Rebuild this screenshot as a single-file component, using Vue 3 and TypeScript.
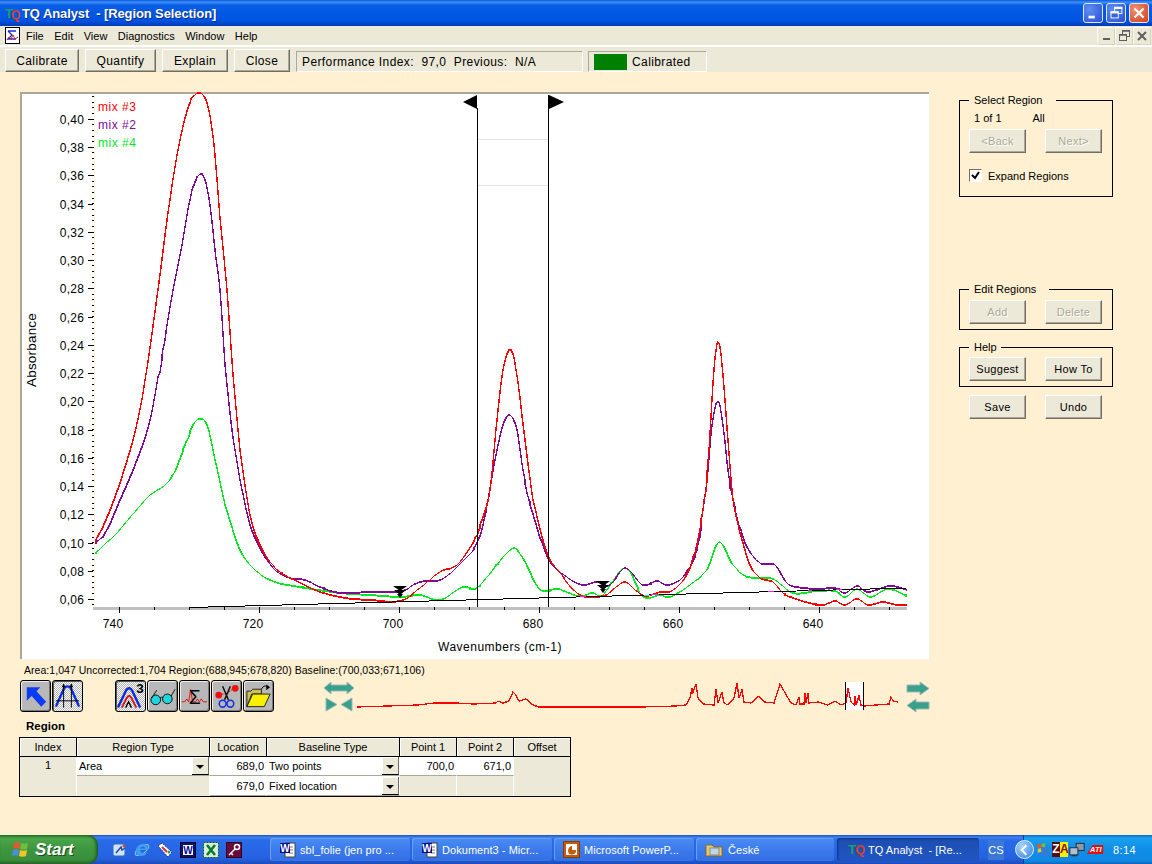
<script setup lang="ts">
type Pt = [number, number];

// catmull-rom through the hand-read points, snapped to whole pixels for the stepped look
const smooth = (pts: Pt[]): string => {
  const out: string[] = [];
  for (let i = 0; i < pts.length - 1; i++) {
    const p0 = pts[Math.max(i - 1, 0)];
    const p1 = pts[i];
    const p2 = pts[i + 1];
    const p3 = pts[Math.min(i + 2, pts.length - 1)];
    const steps = Math.max(1, Math.ceil(p2[0] - p1[0]));
    for (let s = 0; s < steps; s++) {
      const t = s / steps;
      const f = (a: number, b: number, c: number, d: number) =>
        0.5 * (2 * b + (c - a) * t + (2 * a - 5 * b + 4 * c - d) * t * t + (3 * b - a - 3 * c + d) * t * t * t);
      out.push(`${Math.round(f(p0[0], p1[0], p2[0], p3[0]))},${Math.round(f(p0[1], p1[1], p2[1], p3[1]))}`);
    }
  }
  const last = pts[pts.length - 1];
  out.push(`${last[0]},${last[1]}`);
  return out.join(" ");
};

const redPts: Pt[] = [
  [95, 542], [105, 522], [115, 497], [125, 467], [135, 432], [145, 380], [158, 290], [170, 200], [180, 140], [190, 103],
  [195, 95], [199, 93], [203, 95], [208, 107], [214, 145], [220, 218], [227, 290], [233, 375], [240, 450], [250, 515],
  [260, 545], [270, 562], [280, 572], [300, 583], [320, 592], [345, 598], [370, 600], [400, 601], [420, 588], [440, 572],
  [457, 565], [473, 543], [483, 517], [490, 490], [497, 420], [503, 370], [510, 350], [516, 370], [525, 440], [533, 500],
  [547, 553], [560, 573], [580, 595], [603, 596], [615, 588], [625, 582], [635, 590], [645, 596], [660, 592], [673, 590],
  [690, 568], [703, 510], [709, 450], [714, 370], [718, 342], [722, 365], [728, 440], [733, 500], [740, 533], [750, 565],
  [760, 578], [773, 582], [783, 593], [793, 598], [820, 605], [835, 601], [845, 605], [857, 599], [868, 605], [883, 602],
  [897, 605], [907, 605],
];
const purplePts: Pt[] = [
  [95, 543], [105, 533], [120, 500], [135, 465], [150, 420], [165, 340], [173, 290], [182, 245], [190, 200], [195, 182],
  [200, 174], [205, 180], [210, 205], [215, 250], [220, 290], [225, 365], [232, 430], [240, 480], [250, 525], [262, 552],
  [275, 570], [290, 578], [305, 580], [320, 587], [340, 593], [370, 592], [395, 592], [405, 590], [420, 582], [440, 580],
  [457, 567], [477, 543], [488, 500], [495, 460], [503, 425], [510, 415], [517, 430], [523, 470], [529, 500], [548, 558],
  [567, 577], [583, 585], [597, 582], [610, 585], [625, 568], [643, 585], [657, 581], [667, 585], [683, 577], [697, 550],
  [703, 510], [707, 480], [712, 425], [718, 401], [723, 425], [728, 470], [733, 500], [745, 543], [760, 563], [775, 565],
  [787, 583], [797, 587], [817, 589], [835, 588], [845, 593], [857, 586], [868, 592], [890, 586], [907, 590],
];
const greenPts: Pt[] = [
  [95, 553], [115, 535], [135, 512], [150, 495], [170, 480], [185, 445], [193, 425], [200, 419], [207, 425], [215, 460],
  [225, 505], [240, 550], [255, 570], [275, 582], [300, 587], [340, 593], [370, 595], [400, 597], [420, 595], [440, 600],
  [463, 587], [478, 587], [510, 550], [522, 557], [538, 587], [547, 591], [558, 589], [578, 596], [593, 593], [603, 595],
  [625, 568], [640, 593], [648, 598], [660, 595], [670, 597], [690, 585], [707, 570], [719, 542], [733, 565], [748, 577],
  [773, 579], [793, 593], [817, 591], [835, 591], [845, 597], [857, 589], [870, 597], [888, 589], [907, 596],
];

const redLine = smooth(redPts);
const purpleLine = smooth(purplePts);
const greenLine = smooth(greenPts);

const yLabels = Array.from({ length: 18 }, (_, i) => ({
  y: Math.round(119 + 28.24 * i),
  text: (0.4 - 0.02 * i).toFixed(2).replace(".", ","),
}));
const yMinor = Array.from({ length: 91 }, (_, i) => Math.round(96 + 5.648 * i)).filter((y) => y < 607);
const xLabels = [
  { x: 113, text: "740" },
  { x: 253, text: "720" },
  { x: 393, text: "700" },
  { x: 533, text: "680" },
  { x: 673, text: "660" },
  { x: 813, text: "640" },
];
const xTicks = Array.from({ length: 23 }, (_, i) => 119.5 + 35 * i).filter((x) => x < 907);

const overview =
  "356,707 417,705 433,703 455,703 473,704 495,703 497,701 502,703 508,701 512,692 514,694 518,701 525,699 532,705 538,707 " +
  "640,707 675,706 685,705 689,698 691,688 692,693 695,684 697,698 702,704 713,705 715,689 717,703 720,695 721,693 723,703 " +
  "727,705 733,698 736,683 738,698 741,690 743,702 750,703 758,696 763,702 773,703 779,684 787,698 790,703 795,705 798,697 " +
  "799,704 803,704 804,693 805,703 807,693 808,703 817,702 827,705 834,701 840,705 845,703 847,688 850,702 853,705 854,696 " +
  "855,705 858,696 860,705 863,706 888,704 890,697 892,701 897,702";

const menus = ["File", "Edit", "View", "Diagnostics", "Window", "Help"];
const tasks = [
  { label: "sbl_folie (jen pro ...", icon: "word", width: 140 },
  { label: "Dokument3 - Micr...", icon: "word", width: 140 },
  { label: "Microsoft PowerP...", icon: "ppt", width: 140 },
  { label: "České", icon: "folder", width: 138 },
];
</script>

<template>
  <div class="screen">
    <header class="titlebar">
      <svg class="app-logo" width="16" height="16" viewBox="0 0 16 16">
        <text x="0" y="13" font-size="13" font-weight="700" fill="#1c9a7a" font-family="Liberation Sans, sans-serif">T</text>
        <text x="6" y="14" font-size="12" font-weight="700" fill="#d8402a" font-family="Liberation Sans, sans-serif">Q</text>
      </svg>
      <span class="title-text">TQ Analyst&nbsp; - [Region Selection]</span>
      <div class="win-buttons">
        <span class="win-btn">
          <svg width="20" height="20" viewBox="0 0 20 20"><rect x="5" y="13" width="7" height="3" fill="#fff" /></svg>
        </span>
        <span class="win-btn">
          <svg width="20" height="20" viewBox="0 0 20 20" fill="none" stroke="#fff">
            <rect x="8.5" y="3.5" width="8" height="7" stroke-width="1" />
            <path d="M8 4.5h9" stroke-width="2" />
            <rect x="4.5" y="8.5" width="8" height="7" fill="#3a63dc" stroke-width="1" />
            <path d="M4 9.5h9" stroke-width="2" />
          </svg>
        </span>
        <span class="win-btn win-close">
          <svg width="20" height="20" viewBox="0 0 20 20" stroke="#fff" stroke-width="2.4"><path d="M5 5l10 10M15 5L5 15" /></svg>
        </span>
      </div>
    </header>

    <nav class="menubar">
      <svg class="doc-icon" width="15" height="17" viewBox="0 0 15 17">
        <rect x="0.5" y="0.5" width="14" height="16" fill="#fff" stroke="#000" />
        <path d="M3 4h8M3 4l4 4-4 4h8" fill="none" stroke="#1a2bd0" stroke-width="1.3" />
        <path d="M2 13l2-3 2 2 2-4 2 4 3-2" fill="none" stroke="#e02020" />
      </svg>
      <div class="menu-items">
        <span v-for="m in menus" :key="m">{{ m }}</span>
      </div>
      <div class="mdi-buttons">
        <span class="mdi-btn"><i class="mdi-min"></i></span>
        <span class="mdi-btn">
          <svg width="14" height="14" viewBox="0 0 14 14" fill="none" stroke="#5f5f5f">
            <rect x="5.5" y="1.5" width="7" height="6" />
            <rect x="2.5" y="5.5" width="7" height="6" fill="#ece9d8" />
            <path d="M2 6h8M5 2h8" stroke-width="1.5" />
          </svg>
        </span>
        <span class="mdi-btn">
          <svg width="14" height="14" viewBox="0 0 14 14" stroke="#5f5f5f" stroke-width="2"><path d="M3 3l8 8M11 3l-8 8" /></svg>
        </span>
      </div>
    </nav>

    <div class="toolbar">
      <button class="btn tb-calibrate">Calibrate</button>
      <button class="btn tb-quantify">Quantify</button>
      <button class="btn tb-explain">Explain</button>
      <button class="btn tb-close">Close</button>
      <div class="sunken perf">Performance Index:&nbsp; 97,0&nbsp; Previous:&nbsp; N/A</div>
      <div class="sunken calibrated"><i class="green-box"></i>Calibrated</div>
    </div>

    <main class="workspace">
      <section class="left-col">
        <div class="chart">
          <svg width="910" height="568" viewBox="20 92 910 568" class="chart-svg">
            <rect x="20" y="92" width="910" height="568" fill="#fff" />
            <path d="M20 93h910M21 92v568" stroke="#aca899" stroke-width="2" fill="none" />
            <path d="M20 659.5h910M929.5 92v568" stroke="#f6f3e6" fill="none" />

            <path d="M477 139h71M477 185.500h71" stroke="#e4e4e4" fill="none" shape-rendering="crispEdges" />

            <!-- y axis -->
            <path d="M94.500 94v513" stroke="#fdf3d8" shape-rendering="crispEdges" />
            <g shape-rendering="crispEdges" stroke="#000">
              <path v-for="y in yMinor" :key="y" :d="`M92 ${y}.5h2`" />
              <path v-for="l in yLabels" :key="l.text" :d="`M88 ${l.y}.5h5`" />
            </g>
            <text v-for="l in yLabels" :key="l.y" :x="84" :y="l.y + 5" text-anchor="end" class="axis-text">{{ l.text }}</text>

            <!-- x axis -->
            <rect x="93" y="607" width="814" height="3" fill="#c0c0c0" shape-rendering="crispEdges" />
            <g shape-rendering="crispEdges" stroke="#000">
              <path v-for="(x, i) in xTicks" :key="x" :d="`M${x} 607v${i % 4 === 0 ? 6 : 3}`" />
            </g>
            <text v-for="l in xLabels" :key="l.x" :x="l.x" y="628" text-anchor="middle" class="axis-text">{{ l.text }}</text>
            <text x="500" y="651" text-anchor="middle" class="axis-text wave-text">Wavenumbers (cm-1)</text>
            <text transform="translate(36 350) rotate(-90)" text-anchor="middle" class="axis-text abs-text">Absorbance</text>

            <!-- spectra -->
            <g fill="none" stroke-width="1.4" shape-rendering="crispEdges">
              <polyline :points="greenLine" stroke="#00e81e" />
              <polyline :points="purpleLine" stroke="#800a96" />
              <polyline :points="redLine" stroke="#ff0000" />
              <path d="M190 607.500L907 588" stroke="#000" stroke-width="1" />
              <path d="M580 596.500h6M651 594.500h8M768 591.500h6M808 590.500h4M836 589.500h6" stroke="#ff20ff" stroke-width="1" />
              <path d="M644 595.500h6" stroke="#20e0e0" stroke-width="1" />
            </g>

            <!-- region markers -->
            <path d="M477.500 108V607M548.500 95V607" stroke="#000" shape-rendering="crispEdges" />
            <path d="M477 95v14l-14-7z" fill="#000" />
            <path d="M549 95v14l15-7z" fill="#000" />
            <g fill="#000">
              <path d="M393 586h14l-7 5z M394 590h12l-6 5z M397 594h6l-3 4z" />
              <path d="M596 581h14l-7 5z M597 585h12l-6 5z M600 589h6l-3 4z" />
            </g>

            <text x="98" y="111" class="legend-text" fill="#ff0000">mix #3</text>
            <text x="98" y="129" class="legend-text" fill="#800a96">mix #2</text>
            <text x="98" y="147" class="legend-text" fill="#00e81e">mix #4</text>
          </svg>
        </div>

        <div class="status">Area:1,047 Uncorrected:1,704 Region:(688,945;678,820) Baseline:(700,033;671,106)</div>

        <div class="tools">
          <button class="tool">
            <svg width="30" height="30" viewBox="0 0 30 30"><path d="M6 6h14l-4 4 10 11-5 5L11 15l-5 5z" fill="#0c3cf2" /></svg>
          </button>
          <button class="tool tool-on">
            <svg width="30" height="30" viewBox="0 0 30 30" fill="none">
              <path d="M3 26L11 8c2-4 6-4 8 0l8 18" stroke="#0a2ce0" stroke-width="2.5" />
              <path d="M11 3v24M19 3v24M3 20h24" stroke="#000" />
              <path d="M9 6l2-4 2 4zM17 6l2-4 2 4z" fill="#000" />
            </svg>
          </button>
          <button class="tool tool-on tool-gap">
            <svg width="30" height="30" viewBox="0 0 30 30" fill="none">
              <path d="M2 27L10 10c2-4 5-4 7 0l8 17" stroke="#0a2ce0" stroke-width="2.5" />
              <path d="M6 27l5-10c2-3 3-3 5 0l5 10" stroke="#e01010" stroke-width="2" />
              <path d="M10 27l3-6 3 6" stroke="#000" stroke-width="1.500" />
              <text x="21" y="12" class="icon-num">3</text>
            </svg>
          </button>
          <button class="tool">
            <svg width="30" height="30" viewBox="0 0 30 30" fill="none" stroke="#111">
              <circle cx="8" cy="19" r="5" fill="#1fd6dc" />
              <circle cx="20" cy="18" r="5" fill="#1fd6dc" />
              <path d="M12.500 17c1.500-1 2-1 3 0M4 17L9 9M24 15l4-7" />
            </svg>
          </button>
          <button class="tool">
            <svg width="30" height="30" viewBox="0 0 30 30" fill="none">
              <path d="M2 21h3l2-3 2 3 2-13 2 13h3l2-3 2 3 2-3 2 3h4" stroke="#e01010" />
              <text x="9" y="23" class="icon-sigma">Σ</text>
            </svg>
          </button>
          <button class="tool">
            <svg width="30" height="30" viewBox="0 0 30 30" fill="none">
              <circle cx="7" cy="14" r="3.500" fill="#f01010" />
              <circle cx="24" cy="7" r="3.500" fill="#f01010" />
              <path d="M10 13h5M21 8l-6 5" stroke="#e01010" stroke-dasharray="2 1" />
              <path d="M11 5l6 14M19 5l-6 14" stroke="#111" stroke-width="1.500" />
              <circle cx="11" cy="23" r="3.500" stroke="#1030e0" stroke-width="1.600" />
              <circle cx="19" cy="23" r="3.500" stroke="#1030e0" stroke-width="1.600" />
            </svg>
          </button>
          <button class="tool">
            <svg width="30" height="30" viewBox="0 0 30 30">
              <path d="M3 10h4l2-2h9v5H8L3 26z" fill="#d0c050" stroke="#222" />
              <path d="M3 26l6-13h18l-6 13z" fill="#f8f000" stroke="#222" />
              <path d="M18 8c2-4 5-4 7-2" fill="none" stroke="#000" />
              <path d="M23 3l4 3-4 3z" fill="#000" />
            </svg>
          </button>

          <div class="nav-pair nav-left">
            <svg width="30" height="14" viewBox="0 0 30 14"><path d="M0 7l7-6v3h16V1l7 6-7 6v-3H7v3z" fill="#39a08c" stroke="#9fb8b8" /></svg>
            <svg width="30" height="15" viewBox="0 0 30 15"><path d="M2 1l11 6.500L2 14zM28 1L17 7.500 28 14z" fill="#39a08c" stroke="#9fb8b8" /></svg>
          </div>
          <svg class="overview" width="550" height="34" viewBox="352 680 550 34">
            <rect x="844" y="682" width="18" height="28" fill="#fff" />
            <polyline :points="overview" fill="none" stroke="#ff0000" stroke-width="1.300" shape-rendering="crispEdges" />
            <path d="M844.500 682v28M862.500 682v28" stroke="#000" shape-rendering="crispEdges" />
          </svg>
          <div class="nav-pair nav-right">
            <svg width="24" height="15" viewBox="0 0 24 15"><path d="M1 4h13V1l9 6.500-9 6.500v-3H1z" fill="#39a08c" stroke="#9fb8b8" /></svg>
            <svg width="24" height="15" viewBox="0 0 24 15"><path d="M23 4H10V1L1 7.500 10 14v-3h13z" fill="#39a08c" stroke="#9fb8b8" /></svg>
          </div>
        </div>

        <h3 class="region-label">Region</h3>

        <div class="grid">
          <div class="head">Index</div>
          <div class="head">Region Type</div>
          <div class="head">Location</div>
          <div class="head">Baseline Type</div>
          <div class="head">Point 1</div>
          <div class="head">Point 2</div>
          <div class="head last">Offset</div>

          <div class="cell beige index">1</div>
          <div class="cell white combo"><span>Area</span><i class="drop"></i></div>
          <div class="cell white num">689,0</div>
          <div class="cell white combo"><span>Two points</span><i class="drop"></i></div>
          <div class="cell white num">700,0</div>
          <div class="cell white num">671,0</div>
          <div class="cell beige offset"></div>

          <div class="cell beige"></div>
          <div class="cell white num">679,0</div>
          <div class="cell white combo"><span>Fixed location</span><i class="drop"></i></div>
          <div class="cell beige"></div>
          <div class="cell beige"></div>
        </div>
      </section>

      <aside class="right-col">
        <fieldset class="group group-select">
          <legend>Select Region</legend>
          <div class="counts"><span>1 of 1</span><span>All</span></div>
          <div class="btn-row">
            <button class="btn side" disabled>&lt;Back</button>
            <button class="btn side" disabled>Next&gt;</button>
          </div>
          <label class="check">
            <span class="box">
              <svg width="9" height="9" viewBox="0 0 9 9"><path d="M1 4l3 3 4-6" fill="none" stroke="#000" stroke-width="2" /></svg>
            </span>
            Expand Regions
          </label>
        </fieldset>

        <fieldset class="group group-edit">
          <legend>Edit Regions</legend>
          <div class="btn-row">
            <button class="btn side" disabled>Add</button>
            <button class="btn side" disabled>Delete</button>
          </div>
        </fieldset>

        <fieldset class="group group-help">
          <legend>Help</legend>
          <div class="btn-row">
            <button class="btn side">Suggest</button>
            <button class="btn side">How To</button>
          </div>
        </fieldset>

        <div class="btn-row save-row">
          <button class="btn side">Save</button>
          <button class="btn side">Undo</button>
        </div>
      </aside>
    </main>

    <footer class="taskbar">
      <div class="start">
        <svg width="20" height="19" viewBox="0 0 20 19">
          <path d="M3 3c2-1 4-1 6 0l-1 6c-2-1-4-1-6 0z" fill="#e8562a" />
          <path d="M10 3c2 1 4 1 7 0l-1 6c-2 1-5 1-7 0z" fill="#6fbd3a" />
          <path d="M2 10c2-1 4-1 6 0l-1 6c-2-1-4-1-6 0z" fill="#4a8de8" />
          <path d="M9 10c2 1 4 1 7 0l-1 6c-2 1-5 1-7 0z" fill="#f4c428" />
        </svg>
        <span>Start</span>
      </div>

      <div class="quick">
        <svg width="16" height="16" viewBox="0 0 16 16">
          <rect x="2" y="2" width="12" height="12" rx="2" fill="#cfe4fa" stroke="#2f6fc0" />
          <path d="M5 11l5-6 1 3 3-2" fill="none" stroke="#1d4fa8" stroke-width="1.500" />
          <circle cx="13" cy="4" r="1.500" fill="#e04030" />
        </svg>
        <svg width="16" height="16" viewBox="0 0 16 16">
          <ellipse cx="8" cy="8" rx="8" ry="3.500" transform="rotate(-35 8 8)" fill="none" stroke="#8fc8f4" />
          <path d="M2 9c0-4 3-7 7-7s5 3 5 6H6c0 3 4 4 7 2-1 3-3 4-6 4-3 0-5-2-5-5zM6 6.500h5C11 4 6 4 6 6.500z" fill="#3f9fe8" />
        </svg>
        <svg width="16" height="16" viewBox="0 0 16 16">
          <path d="M1 4l4-3 10 9-4 5z" fill="#fff" stroke="#1a2c80" stroke-dasharray="2 1" />
          <path d="M5 5l5 5" stroke="#d03030" stroke-width="2" />
          <circle cx="12" cy="10" r="1.500" fill="#30a040" />
        </svg>
        <svg width="16" height="16" viewBox="0 0 16 16">
          <rect x="0.500" y="0.500" width="15" height="15" fill="#000c8a" stroke="#000" />
          <rect x="3" y="3" width="10" height="10" fill="#fff" />
          <text x="8" y="12" text-anchor="middle" class="mini-letter" fill="#000c8a">W</text>
        </svg>
        <svg width="16" height="16" viewBox="0 0 16 16">
          <rect x="0.500" y="0.500" width="15" height="15" fill="#d8ecd8" stroke="#0a5a20" stroke-dasharray="2 1" />
          <path d="M4 3l8 10M12 3L4 13" stroke="#0a7a2a" stroke-width="2.500" />
        </svg>
        <svg width="16" height="16" viewBox="0 0 16 16">
          <rect x="0.500" y="0.500" width="15" height="15" fill="#6a0a3a" stroke="#30051c" />
          <circle cx="11" cy="5" r="2.500" fill="none" stroke="#fff" stroke-width="1.500" />
          <path d="M9 7l-6 6M5 11l2 2" stroke="#fff" stroke-width="1.500" />
        </svg>
      </div>

      <div v-for="t in tasks" :key="t.label" class="task" :style="{ width: t.width + 'px' }">
        <svg v-if="t.icon === 'word'" width="17" height="17" viewBox="0 0 17 17">
          <rect x="6" y="2" width="10" height="14" fill="#fff" stroke="#444" />
          <path d="M10 6h4M10 9h4M10 12h4" stroke="#777" />
          <rect x="1" y="2" width="10" height="10" fill="#000c8a" />
          <text x="6" y="10.500" text-anchor="middle" class="mini-letter" fill="#fff">W</text>
        </svg>
        <svg v-else-if="t.icon === 'ppt'" width="17" height="17" viewBox="0 0 17 17">
          <rect x="0.500" y="0.500" width="16" height="16" fill="#c8580a" stroke="#80400a" />
          <rect x="3" y="3" width="11" height="11" fill="#fff" />
          <path d="M9 5v4h4a4 4 0 0 1-8 1c0-3 2-5 4-5z" fill="#c8580a" />
        </svg>
        <svg v-else width="19" height="17" viewBox="0 0 19 17">
          <path d="M1 4h6l2 2h8v9H1z" fill="#e8c878" stroke="#8a6a20" />
          <rect x="5" y="7" width="9" height="7" fill="#bcd8f0" stroke="#8a8a70" />
        </svg>
        <span>{{ t.label }}</span>
      </div>
      <div class="task task-active">
        <svg width="18" height="17" viewBox="0 0 20 17">
          <text x="0" y="14" font-size="15" font-weight="700" fill="#1c9a7a" font-family="Liberation Sans, sans-serif">T</text>
          <text x="8" y="14" font-size="14" font-weight="700" fill="#d8402a" font-family="Liberation Sans, sans-serif">Q</text>
        </svg>
        <span>TQ Analyst&nbsp; - [Re...</span>
      </div>
      <span class="lang">CS</span>

      <div class="tray">
        <span class="chevron">
          <svg width="18" height="18" viewBox="0 0 18 18" fill="none" stroke="#fff" stroke-width="2.200"><path d="M11 4L6 9l5 5" /></svg>
        </span>
        <svg width="16" height="17" viewBox="0 0 17 17">
          <circle cx="10" cy="10" r="6" fill="#2f7fd8" />
          <path d="M2 3l4-1 1 4-4 1z" fill="#e8562a" />
          <path d="M7 2l4 0 0 4-4 0z" fill="#6fbd3a" />
          <path d="M3 8l3-1 1 4-4 1z" fill="#f4c428" />
        </svg>
        <span class="za"><b>Z</b><b class="za-a">A</b></span>
        <svg width="16" height="16" viewBox="0 0 18 17">
          <rect x="8" y="1" width="9" height="8" fill="#8a9aaa" stroke="#222" />
          <rect x="1" y="6" width="9" height="8" fill="#b0c0d0" stroke="#222" />
          <path d="M3 15h6" stroke="#222" />
        </svg>
        <svg width="18" height="13" viewBox="0 0 22 15">
          <path d="M1 13L8 2h13v11z" fill="#e01010" />
          <text x="12" y="11" text-anchor="middle" class="ati">ATI</text>
        </svg>
        <span class="clock">8:14</span>
      </div>
    </footer>
  </div>
</template>

<style scoped>
.screen {
  width: 1152px;
  height: 864px;
  display: flex;
  flex-direction: column;
  overflow: hidden;
  font-family: "Liberation Sans", Arial, sans-serif;
  font-size: 12px;
  color: #000;
  background: #fef0d1;
}

.titlebar {
  height: 26px;
  flex: none;
  display: flex;
  align-items: center;
  padding: 0 3px 0 5px;
  box-sizing: border-box;
  background: linear-gradient(#0a52e0 0, #3d93f8 8%, #0a5ce4 20%, #0258e4 50%, #0055e0 80%, #0238b8 100%);
}

.app-logo {
  margin-right: 1px;
  overflow: visible;
}

.title-text {
  color: #fff;
  font-weight: 700;
  font-size: 13px;
  letter-spacing: -0.1px;
  text-shadow: 1px 1px #0a2a90;
}

.win-buttons {
  margin-left: auto;
  display: flex;
  gap: 3px;
}

.win-btn {
  width: 20px;
  height: 20px;
  border: 1px solid #dfe8ff;
  border-radius: 3px;
  box-sizing: border-box;
  display: flex;
  align-items: center;
  justify-content: center;
  background: radial-gradient(circle at 30% 30%, #5f8df0, #2a50d0);
}

.win-close {
  background: radial-gradient(circle at 30% 30%, #f09070, #d0401a);
}

.menubar {
  height: 19px;
  flex: none;
  display: flex;
  align-items: center;
  padding: 0 2px 0 5px;
  background: #ece9d8;
  border-bottom: 2px solid #fff;
}

.menu-items {
  display: flex;
  gap: 10.500px;
  margin-left: 6px;
  font-size: 11px;
}

.mdi-buttons {
  margin-left: auto;
  display: flex;
  gap: 2px;
}

.mdi-btn {
  width: 16px;
  height: 16px;
  display: flex;
  align-items: center;
  justify-content: center;
  background: #ece9d8;
  box-shadow: 1px 1px 0 #d8d4c0, -1px -1px 0 #fbfaf4;
}

.mdi-min {
  width: 7px;
  height: 2px;
  background: #5f5f5f;
  margin-top: 7px;
}

.toolbar {
  height: 25px;
  flex: none;
  display: flex;
  gap: 6px;
  padding: 2px 0 0 5px;
  box-sizing: border-box;
  background: #ece9d8;
}

.btn {
  font: inherit;
  font-size: 12px;
  letter-spacing: 0.4px;
  color: #000;
  padding: 0;
  background: #ece9d8;
  border: 1px solid;
  border-color: #fff #716f64 #716f64 #fff;
  box-shadow: inset -1px -1px 0 #aca899;
}

.btn:disabled {
  color: #aca899;
  text-shadow: 1px 1px #fff;
}

.tb-calibrate {
  width: 74px;
}

.tb-quantify {
  width: 71px;
}

.tb-explain {
  width: 66px;
}

.tb-close {
  width: 56px;
}

.sunken {
  height: 21px;
  margin-top: 2px;
  box-sizing: border-box;
  display: flex;
  align-items: center;
  border: 1px solid;
  border-color: #aca899 #fff #fff #aca899;
  letter-spacing: 0.4px;
}

.perf {
  width: 287px;
  padding-left: 5px;
  margin-right: -1px;
}

.calibrated {
  width: 119px;
  padding-left: 5px;
}

.green-box {
  width: 33px;
  height: 16px;
  background: #008000;
  margin-right: 5px;
}

.workspace {
  flex: 1;
  display: flex;
  padding: 20px 0 0 20px;
  min-height: 0;
}

.left-col {
  width: 910px;
  flex: none;
}

.chart-svg {
  display: block;
}

.axis-text {
  font-size: 12px;
  letter-spacing: 0.2px;
  fill: #000;
}

.wave-text {
  letter-spacing: 0.5px;
}

.abs-text {
  font-size: 13.500px;
}

.legend-text {
  font-size: 12px;
  letter-spacing: 0.5px;
}

.status {
  margin: 3px 0 0 4px;
  height: 14px;
  line-height: 14px;
  font-size: 10.500px;
  letter-spacing: 0.04px;
  white-space: nowrap;
}

.tools {
  display: flex;
  margin-top: 3px;
  height: 34px;
  align-items: flex-start;
}

.tool {
  width: 31px;
  height: 32px;
  margin: 0 1px 0 0;
  padding: 0;
  border: 1px solid #000;
  border-radius: 3px;
  background: #b8b8b8;
  box-shadow: inset 1px 1px 0 #eee, inset -1px -1px 0 #777;
  display: flex;
  align-items: center;
  justify-content: center;
}

.tool-on {
  background: repeating-conic-gradient(#fff 0 25%, #b4b4b4 0 50%) 0 0 / 2px 2px;
  box-shadow: inset 1px 1px 0 #555;
}

.tool-gap {
  margin-left: 31px;
}

.icon-num {
  font-size: 14px;
  font-weight: 700;
  fill: #000;
}

.icon-sigma {
  font-size: 20px;
  font-family: "Liberation Sans", sans-serif;
  fill: #000;
}

.mini-letter {
  font-size: 10px;
  font-weight: 700;
}

.ati {
  font-size: 9px;
  font-weight: 700;
  font-style: italic;
  fill: #fff;
}

.nav-pair {
  display: flex;
  flex-direction: column;
  gap: 2px;
  flex: none;
}

.nav-left {
  margin: 1px 0 0 49px;
}

.overview {
  flex: none;
  margin-left: -1px;
}

.nav-right {
  margin: 1px 0 0 3px;
}

.region-label {
  margin: 5px 0 0 6px;
  height: 14px;
  line-height: 14px;
  font-size: 11.500px;
  font-weight: 700;
}

.grid {
  margin: 4px 0 0 -1px;
  width: 552px;
  box-sizing: border-box;
  border: 1px solid #000;
  display: grid;
  grid-template-columns: 57px 133px 57px 133px 57px 57px 56px;
  grid-template-rows: 19px 19px 20px;
  font-size: 11px;
}

.head {
  background: #ece9d8;
  display: flex;
  align-items: center;
  justify-content: center;
  border-right: 1px solid #000;
  border-bottom: 1px solid #000;
  box-shadow: inset 1px 1px 0 #fff;
}

.head.last {
  border-right: 0;
}

.cell {
  display: flex;
  align-items: center;
  box-sizing: border-box;
  border-right: 1px solid #fff;
  border-bottom: 1px solid #aca899;
  min-width: 0;
  padding: 0 2px;
}

.white {
  background: #fff;
}

.beige {
  background: #ece9d8;
  border-bottom-color: #ece9d8;
}

.index {
  grid-row: span 2;
  justify-content: center;
  align-items: flex-start;
  padding-top: 2px;
}

.offset {
  grid-row: span 2;
  border-right: 0;
}

.num {
  justify-content: flex-end;
  padding-right: 2px;
}

.combo {
  padding: 0 0 0 2px;
  justify-content: space-between;
}

.drop {
  width: 17px;
  height: 18px;
  flex: none;
  background: #ece9d8;
  box-sizing: border-box;
  border-right: 1px solid #716f64;
  border-bottom: 1px solid #000;
  box-shadow: inset 1px 1px 0 #fff;
  position: relative;
}

.drop::after {
  content: "";
  position: absolute;
  left: 4px;
  top: 8px;
  border: 4px solid transparent;
  border-top: 4px solid #000;
  border-bottom: 0;
}

.right-col {
  margin-left: 29px;
  width: 154px;
  flex: none;
  display: flex;
  flex-direction: column;
  font-size: 11px;
}

.group {
  margin: 0;
  padding: 0 9px;
  width: 154px;
  box-sizing: border-box;
  border: 1px solid #000;
}

.group legend {
  margin-left: 0;
  padding: 0 13px 0 5px;
  height: 14px;
  line-height: 14px;
}

.group-help legend {
  padding-right: 4px;
}

.group-select {
  height: 104px;
  margin-top: 1px;
}

.group-edit {
  height: 48px;
  margin-top: 85px;
}

.group-help {
  height: 47px;
  margin-top: 10px;
}

.counts {
  display: flex;
  gap: 31px;
  padding-left: 5px;
  height: 14px;
  line-height: 14px;
  margin-top: 4px;
}

.btn-row {
  display: flex;
  justify-content: space-between;
  width: 133px;
}

.group-select .btn-row {
  margin-top: 4px;
}

.group-edit .btn-row {
  margin-top: 4px;
}

.group-help .btn-row {
  margin-top: 3px;
}

.save-row {
  margin: 8px 0 0 10px;
}

.side {
  width: 57px;
  height: 24px;
  font-size: 11px;
  letter-spacing: 0.3px;
}

.check {
  display: flex;
  align-items: center;
  gap: 6px;
  margin-top: 16px;
}

.box {
  width: 11px;
  height: 11px;
  display: flex;
  align-items: center;
  justify-content: center;
  background: #fff;
  border: 1px solid #716f64;
  border-right-color: #fff;
  border-bottom-color: #fff;
}

.taskbar {
  height: 29px;
  flex: none;
  display: flex;
  align-items: center;
  color: #fff;
  font-size: 11px;
  background: linear-gradient(#1f4fc0 0, #3d84f0 8%, #2a6be8 18%, #2562e0 80%, #1c4cbc 100%);
  letter-spacing: 0.05px;
}

.start {
  width: 98px;
  height: 29px;
  flex: none;
  box-sizing: border-box;
  display: flex;
  align-items: center;
  gap: 4px;
  padding-left: 11px;
  border-radius: 0 10px 10px 0;
  background: linear-gradient(#2f7a30 0, #4aa548 12%, #3d9640 50%, #3a8f3c 85%, #2a6e2c 100%);
  box-shadow: inset -2px 0 3px #1e5a20;
}

.start span {
  font-size: 17px;
  font-weight: 700;
  font-style: italic;
  letter-spacing: 0;
  text-shadow: 1px 1px #1a4a1a;
}

.quick {
  display: flex;
  gap: 7px;
  margin-left: 13px;
  width: 159px;
  flex: none;
}

.task {
  height: 23px;
  margin-right: 2px;
  flex: none;
  box-sizing: border-box;
  padding-left: 9px;
  display: flex;
  align-items: center;
  gap: 4px;
  border-radius: 3px;
  background: linear-gradient(#4a8cf4, #3a78ea 60%, #3570e4);
  box-shadow: inset 1px 1px 0 #6aa0f4;
  white-space: nowrap;
  overflow: hidden;
}

.task-active {
  width: 142px;
  margin-left: 1px;
  padding-left: 11px;
  gap: 2px;
  background: linear-gradient(#1c4cb0, #2157c4);
  box-shadow: inset 1px 1px 2px #12357f;
}

.lang {
  margin-left: 7px;
  width: 16px;
  text-align: center;
  padding: 4px 0;
  background: #3a78d8;
}

.tray {
  margin-left: auto;
  width: 129px;
  height: 29px;
  flex: none;
  box-sizing: border-box;
  display: flex;
  align-items: center;
  gap: 1px;
  position: relative;
  padding-left: 11px;
  background: linear-gradient(#1268c8 0, #1aa0ee 10%, #108ee8 50%, #0f88e2 90%, #0f60b8 100%);
  border-left: 1px solid #0c3f96;
}

.chevron {
  position: absolute;
  left: -9px;
  top: 5px;
  width: 19px;
  height: 19px;
  border-radius: 50%;
  display: flex;
  align-items: center;
  justify-content: center;
  background: radial-gradient(circle at 35% 30%, #a8d4fa, #2d80e4);
  border: 1px solid #e0f0ff;
  box-sizing: border-box;
}

.za {
  display: flex;
  font-size: 12px;
  line-height: 15px;
  letter-spacing: 0;
}

.za b {
  width: 8px;
  text-align: center;
  background: #5a0a0a;
  color: #fff;
}

.za b.za-a {
  background: #f8f000;
  color: #8a1010;
}

.clock {
  margin-left: 8px;
  letter-spacing: 0.4px;
}
</style>
<style>
html,
body {
  margin: 0;
  background: #fef0d1;
}
</style>
